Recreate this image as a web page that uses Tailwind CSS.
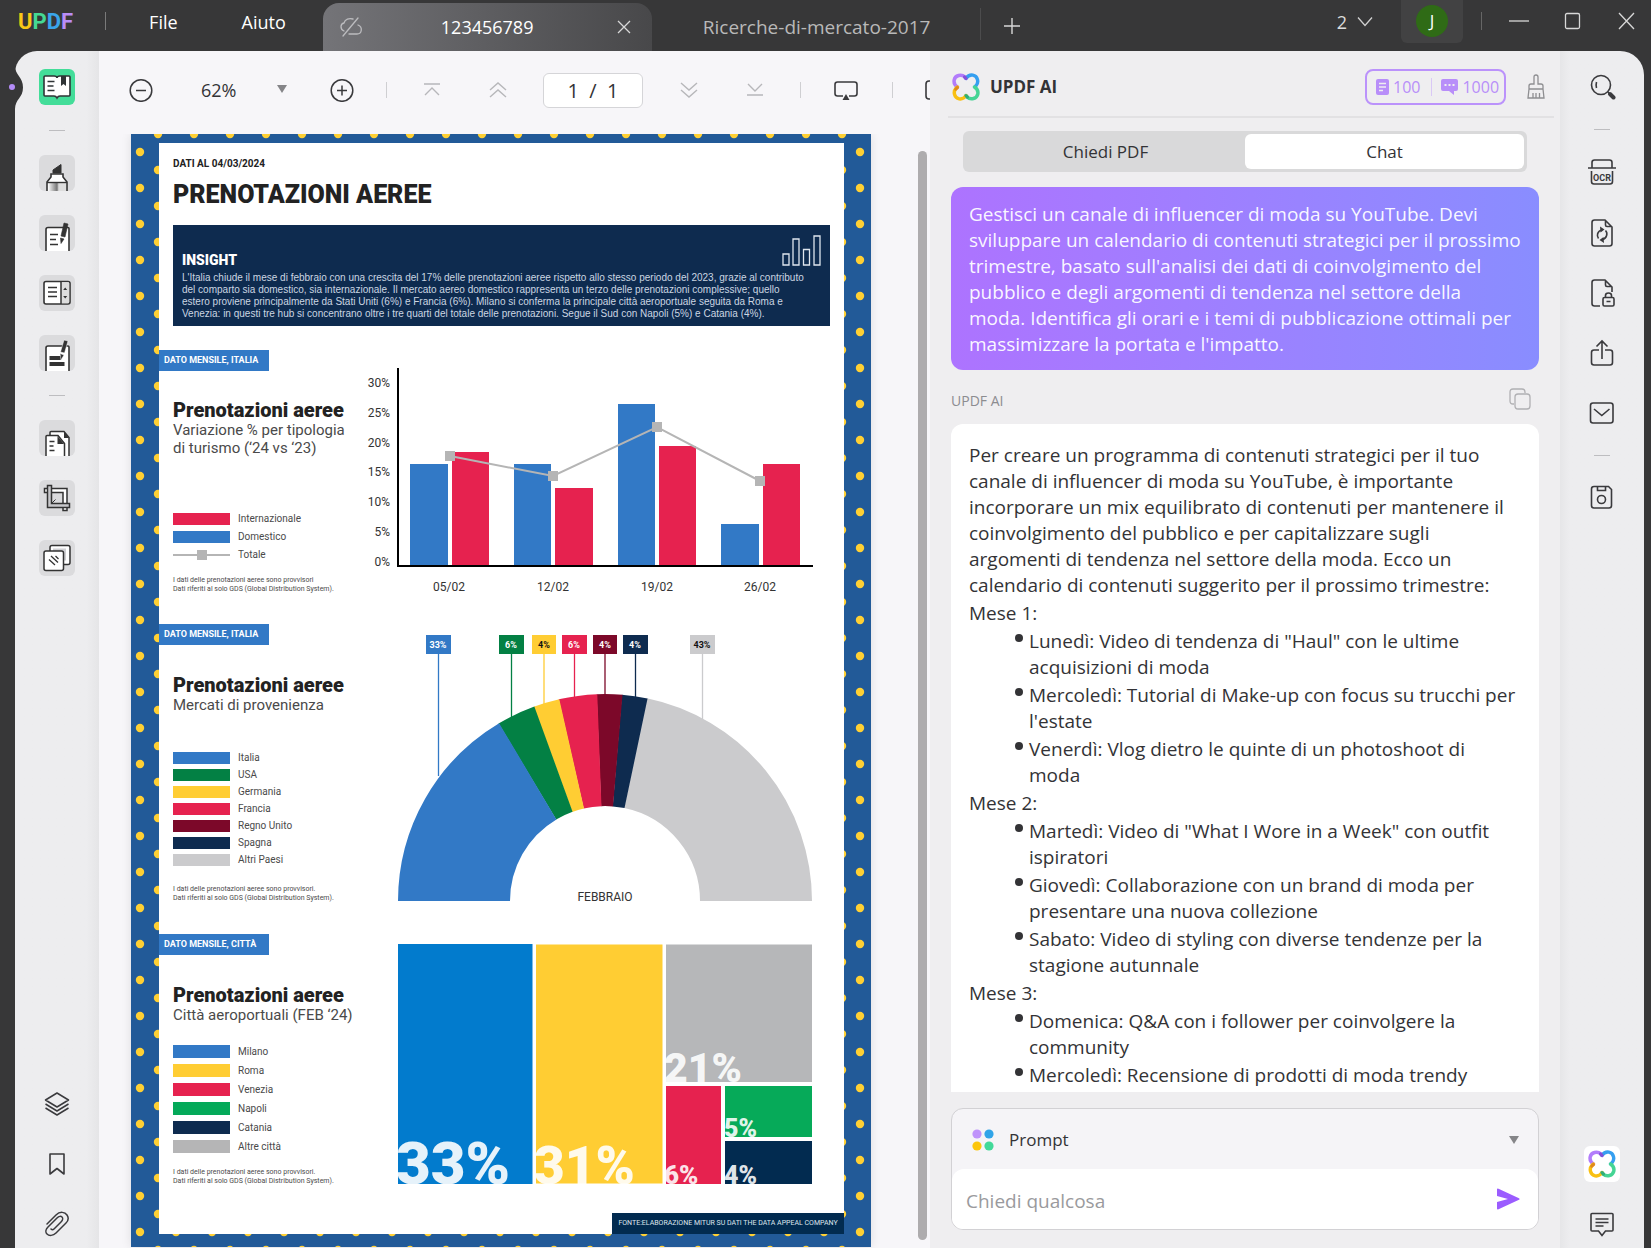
<!DOCTYPE html>
<html lang="it">
<head>
<meta charset="utf-8">
<title>UPDF - 123456789</title>
<script src="https://cdn.jsdelivr.net/npm/@tailwindcss/browser@4"></script>
</head>
<body class="flex h-screen flex-col overflow-hidden bg-[#373738] font-['Open_Sans',sans-serif] text-[#333336]">

<!-- Shared symbols -->
<svg class="hidden" aria-hidden="true">
  <symbol id="clover" viewBox="0 0 26 26">
    <g fill="none" stroke-width="3.2" stroke-linecap="round">
      <path stroke="#b27cfb" d="M5 13C2.400 11.200 1.600 9 2 6.600C2.800 2 8.800 .8 12 3.800L13 5"/>
      <path stroke="#359ff0" transform="rotate(90 13 13)" d="M5 13C2.400 11.200 1.600 9 2 6.600C2.800 2 8.800 .8 12 3.800L13 5"/>
      <path stroke="#45d494" transform="rotate(180 13 13)" d="M5 13C2.400 11.200 1.600 9 2 6.600C2.800 2 8.800 .8 12 3.800L13 5"/>
      <path stroke="#f9c012" transform="rotate(270 13 13)" d="M5 13C2.400 11.200 1.600 9 2 6.600C2.800 2 8.800 .8 12 3.800L13 5"/>
    </g>
    <path d="M5 13.500l-1.500 1.500" stroke="#e08a1c" stroke-width="3" fill="none" stroke-linecap="round"/>
    <path d="M13 21l1.300 1.300" stroke="#2fae78" stroke-width="3" fill="none" stroke-linecap="round"/>
    <path d="M13 5l-1.300-1.300" stroke="#8450d8" stroke-width="3" fill="none" stroke-linecap="round"/>
  </symbol>
</svg>

<!-- Title bar -->
<header class="flex h-[51px] shrink-0 items-start text-[18px] text-white">
  <div class="ml-[18px] mt-2 font-['Roboto',sans-serif] text-[22px] font-bold leading-7" aria-label="UPDF"><span class="text-[#f9c916]">U</span><span class="text-[#45d894]">P</span><span class="text-[#3aa5ea]">D</span><span class="text-[#b98cf7]">F</span></div>
  <span class="ml-8 mt-3 h-[18px] w-px bg-[#7a7a7a]"></span>
  <button class="ml-[43px] mt-2 leading-7">File</button>
  <button class="ml-16 mt-2 leading-7">Aiuto</button>
  <div class="ml-[37px] mt-[3px] flex h-12 w-[329px] items-center rounded-t-2xl bg-linear-to-r from-[#747478] to-[#48484a]">
    <svg class="ml-4 -mt-px h-5 w-6" viewBox="0 0 24 20" fill="none" stroke="#bcbcbf" stroke-width="1.300" stroke-linecap="round"><path d="M19 1L4 19M5 14C1 12 1 7 5 6C6 2 10 1 14 2M10 17h8C23 17 24 10 19 8"/></svg>
    <a href="#" class="ml-[78px]">123456789</a>
    <button class="ml-auto mr-[20px]" aria-label="Chiudi scheda"><svg class="h-4 w-4" viewBox="0 0 16 16" stroke="#d8d8d8" stroke-width="1.300"><path d="M2 2l12 12M14 2L2 14"/></svg></button>
  </div>
  <a href="#" class="ml-[51px] mt-[13px] w-[277px] text-[19px] leading-7 text-[#b9b9b9]">Ricerche-di-mercato-2017</a>
  <span class="mt-2 h-8 w-px bg-[#4c4c4d]"></span>
  <button class="ml-[22px] mt-[17px]" aria-label="Nuova scheda"><svg class="h-[18px] w-[18px]" viewBox="0 0 18 18" stroke="#d8d8d8" stroke-width="1.400"><path d="M9 1v16M1 9h16"/></svg></button>
  <button class="ml-auto mr-7 mt-2 flex items-center gap-2.5 leading-7 text-[#dcdcdc]">2<svg class="h-3 w-4" viewBox="0 0 16 12" fill="none" stroke="#d0d0d0" stroke-width="1.300"><path d="M1 1.500l7 8 7-8"/></svg></button>
  <button class="flex h-[43px] w-[62px] items-center justify-center rounded-b-md bg-[#424243]"><span class="-mt-px size-8 rounded-full bg-[#2f6b16] text-[17px] leading-8">J</span></button>
  <span class="ml-[18px] mt-3 h-[18px] w-px bg-[#666]"></span>
  <button class="ml-[27px] mt-3" aria-label="Riduci"><svg class="h-[18px] w-5" viewBox="0 0 20 18" stroke="#d8d8d8" stroke-width="1.300"><path d="M0 9h20"/></svg></button>
  <button class="ml-[35px] mt-3" aria-label="Ingrandisci"><svg class="h-[18px] w-[18px]" viewBox="0 0 18 18" fill="none" stroke="#d8d8d8" stroke-width="1.300"><rect x="1.500" y="1.500" width="14" height="15" rx="1.500"/></svg></button>
  <button class="ml-9 mr-[15px] mt-3" aria-label="Chiudi"><svg class="h-[18px] w-[18px]" viewBox="0 0 18 18" stroke="#d8d8d8" stroke-width="1.300"><path d="M1 1l15 16M16 1L1 17"/></svg></button>
</header>

<div class="ml-[15px] mr-[7px] flex min-h-0 flex-1">

  <!-- Left tool strip -->
  <nav class="relative flex w-[84px] shrink-0 flex-col items-center rounded-tl-[22px] bg-linear-to-r from-[#ededef] from-85% to-[#e5e5e7] pt-[18px]">
    <svg class="absolute -left-[15px] top-[15px] h-[44px] w-6" viewBox="0 0 24 44"><path d="M14 0H15C15 9 23 11 23 21.500S15 33 15 43H14z" fill="#373738"/><circle cx="12" cy="21" r="3" fill="#b48cf8"/></svg>
    <button class="rounded-md bg-[#43dd99]" aria-label="Lettura">
      <svg class="size-9" viewBox="0 0 36 36"><path d="M6 7h9q3 0 3 2q0-2 3-2h9q1 0 1 1v18q0 1-1 1h-9q-2 0-3 2q-1-2-3-2H6q-1 0-1-1V8q0-1 1-1z" fill="#fff" stroke="#2f3436" stroke-width="1.600"/><path d="M8.500 12.500h7M8.500 17h6M8.500 21.500h7" stroke="#2f3436" stroke-width="1.400"/><path d="M22 7h5v10l-2.500-2L22 17z" fill="#2f3436"/></svg>
    </button>
    <span class="mt-[25px] h-px w-4 bg-[#bdbdc0]"></span>
    <button class="mt-6 rounded-md bg-[#dbdbdd]" aria-label="Commento">
      <svg class="size-9" viewBox="0 -1 36 36"><defs><linearGradient id="pen"><stop stop-color="#fff"/><stop offset=".5" stop-color="#777"/><stop offset=".6" stop-color="#ddd"/></linearGradient></defs><path d="M8 36V26l4-5v-3h12v3l4 5v10z" fill="#fff" stroke="#333" stroke-width="1.600"/><path d="M9 27h18v8H9z" fill="url(#pen)"/><path d="M8 26.500h20" stroke="#333" stroke-width="1.400"/><path d="M14 17v-3l8-5.500V17z" fill="#333" stroke="#333"/></svg>
    </button>
    <button class="mt-6 rounded-md bg-[#dbdbdd]" aria-label="Modifica PDF">
      <svg class="size-9" viewBox="0 -1 36 36"><path d="M7 36V13.500q0-2 2-2h20q1 0 1 1V36" fill="#fff" stroke="#333" stroke-width="1.600"/><path d="M11 18.500h8M11 23.500h6M11 28.500h8" stroke="#333" stroke-width="1.400"/><path d="M25 7l4 1-3 13-4-1zM21.500 22l3.500 1-3 4.500z" fill="#333" stroke="#333" stroke-width=".6"/></svg>
    </button>
    <button class="mt-6 rounded-md bg-[#dbdbdd]" aria-label="Modulo">
      <svg class="size-9" viewBox="0 0 36 36"><rect x="5" y="6.500" width="26" height="22.500" rx="2" fill="#fff" stroke="#333" stroke-width="1.600"/><path d="M22 7.200h7q1.200 0 1.200 1.200v18.500q0 1.300-1.200 1.300h-7z" fill="#ddd"/><path d="M22 7v22" stroke="#333" stroke-width="1.500"/><path d="M9 12.500h9M9 17h9M9 21.500h9" stroke="#333" stroke-width="1.400"/><path d="M24.200 15l2-2.500 2 2.500zM24.200 21l2 2.500 2-2.500z" fill="#333"/></svg>
    </button>
    <button class="mt-6 rounded-md bg-[#dbdbdd]" aria-label="Oscura">
      <svg class="size-9" viewBox="0 -1 36 36"><path d="M7 36V12q0-2 2-2h20q1 0 1 1v25" fill="#fff" stroke="#333" stroke-width="1.600"/><path d="M10.500 20H22v4H10.500zM10.500 26h15v4h-15z" fill="#333"/><path d="M25 4l4 1-3.500 12-4-1zM21 17.500l4 1.500-3 5z" fill="#333" stroke="#fff" stroke-width=".5"/></svg>
    </button>
    <span class="mt-6 h-px w-4 bg-[#bdbdc0]"></span>
    <button class="mt-6 rounded-md bg-[#dbdbdd]" aria-label="Organizza pagine">
      <svg class="size-9" viewBox="0 -1 36 36"><path d="M11 30V11.500q0-1 1-1h13l5 6V36H11" fill="#fff" stroke="#333" stroke-width="1.500"/><path d="M25 10.500v6.500h5z" fill="#333"/><path d="M7 36V15.500q0-1 1-1h11l6.500 8V36" fill="#fff" stroke="#333" stroke-width="1.500"/><path d="M18.500 15v8H25z" fill="#333"/><path d="M10.500 20.500h5M10.500 25h4M10.500 29.500h5" stroke="#333" stroke-width="1.300"/></svg>
    </button>
    <button class="mt-6 rounded-md bg-[#dbdbdd]" aria-label="Ritaglia">
      <svg class="size-9" viewBox="0 0 36 36"><path d="M5.500 8.500h22.500v22h-4V12.500H5.500z" fill="#fff" stroke="#333" stroke-width="1.500"/><path d="M8.500 5.500h4V23.500H30.500v4H8.500z" fill="#c8c8cb" stroke="#333" stroke-width="1.500"/><path d="M12.500 23.500l4-4" stroke="#333"/></svg>
    </button>
    <button class="mt-6 rounded-md bg-[#dbdbdd]" aria-label="Filigrana">
      <svg class="size-9" viewBox="0 0 36 36"><rect x="11" y="5.500" width="20" height="19" rx="2" fill="#fff" stroke="#333" stroke-width="1.500"/><path d="M14 8.500h13v12H14z" fill="#cfcfd2"/><rect x="5" y="11" width="19.500" height="19.500" rx="2" fill="#fff" stroke="#333" stroke-width="1.500"/><path d="M10 19.500l6 5.500M12 16l7 6.500M16.500 16l3 3" stroke="#333" stroke-width="1.300"/></svg>
    </button>
    <div class="mt-auto flex flex-col items-center gap-[34px] pb-[11px]">
      <button aria-label="Livelli"><svg class="h-[26px] w-[26px]" viewBox="0 0 26 26" fill="none" stroke="#3a3a3d" stroke-width="1.500" stroke-linejoin="round"><path d="M13 2l11.500 7L13 16 1.500 9zM1.500 13L13 20l11.500-7M1.500 17L13 24l11.500-7"/></svg></button>
      <button aria-label="Segnalibri"><svg class="h-[26px] w-[26px]" viewBox="0 0 26 26" fill="none" stroke="#3a3a3d" stroke-width="1.600" stroke-linejoin="round"><path d="M6 3h14v20l-7-5.500L6 23z"/></svg></button>
      <button aria-label="Allegati"><svg class="h-[26px] w-[26px]" viewBox="0 0 26 26" fill="none" stroke="#3a3a3d" stroke-width="1.500" stroke-linecap="round"><path d="M3 13L12 4c4-4 9-3 11 0 2 3 1 6-1 8l-10 10c-3 3-7 3-9 1s-1-5 1-7l9-9c2-2 4-2 5-1s1 3-1 5l-7 7c-1 1-2 1-3 0"/></svg></button>
    </div>
  </nav>

  <!-- Document viewer -->
  <main class="flex min-w-0 flex-1 flex-col overflow-hidden bg-[#f7f6f9]">
    <div class="flex h-[83px] shrink-0 items-center overflow-hidden pb-[5px] *:shrink-0">
      <button class="ml-[30px]" aria-label="Riduci zoom"><svg class="size-6" viewBox="0 0 24 24" fill="none" stroke="#3a3a3d" stroke-width="1.500"><circle cx="12" cy="12.500" r="10.800"/><path d="M7 12.500h10"/></svg></button>
      <div class="relative ml-12 w-[87px]">
        <select aria-label="Zoom" class="w-full appearance-none bg-transparent text-[18px] leading-7"><option>62%</option></select>
        <svg class="pointer-events-none absolute right-0 top-2 h-2.5 w-3" viewBox="0 0 12 10"><path d="M1 1h10L6 9z" fill="#858588"/></svg>
      </div>
      <button class="ml-[42px]" aria-label="Aumenta zoom"><svg class="size-6" viewBox="0 0 24 24" fill="none" stroke="#3a3a3d" stroke-width="1.500"><circle cx="12" cy="12.500" r="10.800"/><path d="M7 12.500h10M12 7.500v10"/></svg></button>
      <span class="ml-8 h-4 w-px bg-[#cfcfd2]"></span>
      <button class="ml-[35px]" aria-label="Prima pagina"><svg class="size-5" viewBox="0 0 20 20" fill="none" stroke="#b7b7ba" stroke-width="1.400"><path d="M2 4h16M3 15l7-7 7 7"/></svg></button>
      <button class="ml-[46px]" aria-label="Pagina precedente"><svg class="size-5" viewBox="0 0 20 20" fill="none" stroke="#b7b7ba" stroke-width="1.400"><path d="M2 10l8-7 8 7M2 17l8-7 8 7"/></svg></button>
      <input aria-label="Pagina" value="1  /  1" class="ml-[35px] h-[35px] w-[100px] rounded-md border border-[#d5d5d8] bg-white text-center text-[20px]">
      <button class="ml-9" aria-label="Pagina successiva"><svg class="size-5" viewBox="0 0 20 20" fill="none" stroke="#b7b7ba" stroke-width="1.400"><path d="M2 3l8 7 8-7M2 10l8 7 8-7"/></svg></button>
      <button class="ml-[46px]" aria-label="Ultima pagina"><svg class="size-5" viewBox="0 0 20 20" fill="none" stroke="#b7b7ba" stroke-width="1.400"><path d="M3 4l7 7 7-7M2 15h16"/></svg></button>
      <span class="ml-[35px] h-4 w-px bg-[#cfcfd2]"></span>
      <button class="ml-[33px]" aria-label="Presentazione"><svg class="h-6 w-6" viewBox="0 0 24 24" fill="none" stroke="#3a3a3d" stroke-width="1.600"><path d="M9 18H3.500Q1 18 1 15.500V6.500Q1 4 3.500 4h17Q23 4 23 6.500v9Q23 18 20.500 18H15"/><path d="M12 16l3.500 6h-7z" fill="#3a3a3d" stroke="none"/></svg></button>
      <span class="ml-[34px] h-4 w-px bg-[#cfcfd2]"></span>
      <button class="ml-8" aria-label="Vista"><svg class="h-6 w-6" viewBox="0 0 24 24" fill="none" stroke="#3a3a3d" stroke-width="1.600"><rect x="1" y="3" width="22" height="18" rx="3"/></svg></button>
    </div>

    <div class="flex min-h-0 flex-1 justify-between overflow-hidden">
      <article class="relative ml-8 h-[1113px] w-[740px] shrink-0 bg-[#225a98] pl-7 pr-[27px] pt-[9px] font-['Roboto',sans-serif] text-[#222] shadow-[0_0_10px_#0000001a]">
        <svg class="absolute inset-0 h-full w-full" aria-hidden="true">
          <pattern id="dots" width="36" height="36" patternUnits="userSpaceOnUse"><g fill="#ffd034"><circle cx="27" cy="0" r="4.200"/><circle cx="27" cy="36" r="4.200"/><circle cx="9" cy="18" r="4.200"/></g></pattern>
          <rect width="100%" height="100%" fill="url(#dots)"/>
        </svg>

        <div class="relative flex h-[1091px] flex-col bg-white">
          <div class="px-[14px] pt-[13px]">
            <p class="text-[10px] font-bold leading-4">DATI AL 04/03/2024</p>
            <h1 class="mt-2 text-[25px] font-black leading-[30px]">PRENOTAZIONI AEREE</h1>
            <div class="mt-[15px] whitespace-nowrap bg-[#0e2b4f] px-[9px] pb-1.5 pt-2.5">
              <div class="flex h-[33px] items-end justify-between">
                <h2 class="text-[14px] font-black leading-4 text-white">INSIGHT</h2>
                <svg class="h-[31px] w-[39px] self-start" viewBox="0 0 39 31" fill="none" stroke="#dfe6ee" stroke-width="1.300"><path d="M1 30V19h6v11zM11 30V4h6v26zM21.500 30V14.500h6V30zM32 30V1h6v29z"/></svg>
              </div>
              <p class="mt-1 font-['Liberation_Sans',sans-serif] text-[10px] leading-3 text-[#cbd6e2]">L'Italia chiude il mese di febbraio con una crescita del 17% delle prenotazioni aeree rispetto allo stesso periodo del 2023, grazie al contributo<br>del comparto sia domestico, sia internazionale. Il mercato aereo domestico rappresenta un terzo delle prenotazioni complessive; quello<br>estero proviene principalmente da Stati Uniti (6%) e Francia (6%). Milano si conferma la principale città aeroportuale seguita da Roma e<br>Venezia: in questi tre hub si concentrano oltre i tre quarti del totale delle prenotazioni. Segue il Sud con Napoli (5%) e Catania (4%).</p>
            </div>
          </div>

          <!-- Change by kind of tourism -->
          <section class="mt-6 flex h-[274px] shrink-0">
            <div class="w-52 shrink-0 whitespace-nowrap">
              <p class="h-[21px] w-[110px] bg-[#3279c6] pl-[5px] text-[9px] font-bold leading-[21px] text-white">DATO MENSILE, ITALIA</p>
              <div class="pl-[14px]">
                <h2 class="mt-7 text-[20px] font-black leading-[22px]">Prenotazioni aeree</h2>
                <p class="text-[15px] leading-[18px] text-[#4a4a4a]">Variazione % per tipologia<br>di turismo (‘24 vs ‘23)</p>
                <ul class="mt-[53px] text-[10px] leading-[18px] text-[#4a4a4a]">
                  <li class="flex items-center gap-2"><span class="h-3 w-[57px] bg-[#e6224f]"></span>Internazionale</li>
                  <li class="flex items-center gap-2"><span class="h-3 w-[57px] bg-[#3279c6]"></span>Domestico</li>
                  <li class="flex items-center gap-2"><span class="flex h-3 w-[57px] items-center justify-center bg-[linear-gradient(#b5b5b5,#b5b5b5)] bg-[length:100%_2px] bg-center bg-no-repeat"><span class="size-2.5 bg-[#b5b5b5]"></span></span>Totale</li>
                </ul>
                <p class="mt-3 text-[7px] leading-[9px] text-[#4a4a4a]">I dati delle prenotazioni aeree sono provvisori<br>Dati riferiti al solo GDS (Global Distribution System).</p>
              </div>
            </div>
            <svg class="h-[274px] w-[460px] shrink-0" viewBox="367 350 460 274" font-size="12" fill="#333" role="img" aria-label="Variazione per tipologia di turismo">
              <g text-anchor="end"><text x="390" y="387">30%</text><text x="390" y="417">25%</text><text x="390" y="447">20%</text><text x="390" y="476">15%</text><text x="390" y="506">10%</text><text x="390" y="536">5%</text><text x="390" y="566">0%</text></g>
              <g fill="#3279c6"><path d="M410 464h38v102h-38zM514 464h37v102h-37zM618 404h37v162h-37zM721 524h38v42h-38z"/></g>
              <g fill="#e6224f"><path d="M452 452h37v114h-37zM555 488h38v78h-38zM659 446h37v120h-37zM763 464h37v102h-37z"/></g>
              <path d="M398 368v198h415" fill="none" stroke="#000" stroke-width="2"/>
              <path d="M450 456l103 20 104-49 103 54" fill="none" stroke="#b5b5b5" stroke-width="2"/>
              <path d="M445 451h10v10h-10zM548 471h10v10h-10zM652 422h10v10h-10zM755 476h10v10h-10z" fill="#b5b5b5"/>
              <g text-anchor="middle"><text x="449" y="591">05/02</text><text x="553" y="591">12/02</text><text x="657" y="591">19/02</text><text x="760" y="591">26/02</text></g>
            </svg>
          </section>

          <!-- Markets of origin -->
          <section class="flex h-[310px] shrink-0">
            <div class="w-52 shrink-0 whitespace-nowrap">
              <p class="h-[21px] w-[110px] bg-[#3279c6] pl-[5px] text-[9px] font-bold leading-[21px] text-white">DATO MENSILE, ITALIA</p>
              <div class="pl-[14px]">
                <h2 class="mt-[29px] text-[20px] font-black leading-[22px]">Prenotazioni aeree</h2>
                <p class="text-[15px] leading-[18px] text-[#4a4a4a]">Mercati di provenienza</p>
                <ul class="mt-[35px] text-[10px] leading-[17px] text-[#4a4a4a]">
                  <li class="flex items-center gap-2"><span class="h-3 w-[57px] bg-[#3279c6]"></span>Italia</li>
                  <li class="flex items-center gap-2"><span class="h-3 w-[57px] bg-[#038044]"></span>USA</li>
                  <li class="flex items-center gap-2"><span class="h-3 w-[57px] bg-[#ffcd33]"></span>Germania</li>
                  <li class="flex items-center gap-2"><span class="h-3 w-[57px] bg-[#e6224f]"></span>Francia</li>
                  <li class="flex items-center gap-2"><span class="h-3 w-[57px] bg-[#7c0829]"></span>Regno Unito</li>
                  <li class="flex items-center gap-2"><span class="h-3 w-[57px] bg-[#0e2b4f]"></span>Spagna</li>
                  <li class="flex items-center gap-2"><span class="h-3 w-[57px] bg-[#cbcbcd]"></span>Altri Paesi</li>
                </ul>
                <p class="mt-[17px] text-[7px] leading-[9px] text-[#4a4a4a]">I dati delle prenotazioni aeree sono provvisori.<br>Dati riferiti al solo GDS (Global Distribution System).</p>
              </div>
            </div>
            <svg class="h-[310px] w-[460px] shrink-0" viewBox="367 624 460 310" role="img" aria-label="Mercati di provenienza">
              <g stroke-width="1.300"><path d="M438.500 654v122" stroke="#3279c6"/><path d="M511.500 654v64" stroke="#038044"/><path d="M544 654v51" stroke="#ffcd33"/><path d="M574.500 654v44" stroke="#e6224f"/><path d="M605 654v42" stroke="#7c0829"/><path d="M635.500 654v44" stroke="#0e2b4f"/><path d="M702.500 654v67" stroke="#cbcbcd"/></g>
              <g fill="none" stroke-width="112">
                <path pathLength="100" d="M454 901a151 151 0 0 1 302 0" stroke="#cbcbcd" stroke-dasharray="0 56.5 60 200"/>
                <path pathLength="100" d="M454 901a151 151 0 0 1 302 0" stroke="#0e2b4f" stroke-dasharray="0 52.6 4 200"/>
                <path pathLength="100" d="M454 901a151 151 0 0 1 302 0" stroke="#7c0829" stroke-dasharray="0 48.7 4 200"/>
                <path pathLength="100" d="M454 901a151 151 0 0 1 302 0" stroke="#e6224f" stroke-dasharray="0 42.8 6 200"/>
                <path pathLength="100" d="M454 901a151 151 0 0 1 302 0" stroke="#ffcd33" stroke-dasharray="0 38.8 4.100 200"/>
                <path pathLength="100" d="M454 901a151 151 0 0 1 302 0" stroke="#038044" stroke-dasharray="0 32.8 6.100 200"/>
                <path pathLength="100" d="M454 901a151 151 0 0 1 302 0" stroke="#3279c6" stroke-dasharray="32.900 200"/>
              </g>
              <path d="M426 635h25v19h-25z" fill="#3279c6"/><path d="M499 635h25v19h-25z" fill="#038044"/><path d="M532 635h24v19h-24z" fill="#ffcd33"/><path d="M562 635h25v19h-25z" fill="#e6224f"/><path d="M593 635h24v19h-24z" fill="#7c0829"/><path d="M623 635h25v19h-25z" fill="#0e2b4f"/><path d="M690 635h25v19h-25z" fill="#cbcbcd"/>
              <g font-size="9" font-weight="700" text-anchor="middle" fill="#fff"><text x="438" y="648">33%</text><text x="511" y="648">6%</text><text x="544" y="648" fill="#111">4%</text><text x="574" y="648">6%</text><text x="605" y="648">4%</text><text x="635" y="648">4%</text><text x="702" y="648" fill="#111">43%</text></g>
              <text x="605" y="901" font-size="12" text-anchor="middle" fill="#333">FEBBRAIO</text>
            </svg>
          </section>

          <!-- Airport cities -->
          <section class="flex h-[279px] shrink-0">
            <div class="w-52 shrink-0 whitespace-nowrap">
              <p class="h-[21px] w-[110px] bg-[#3279c6] pl-[5px] text-[9px] font-bold leading-[21px] text-white">DATO MENSILE, CITTÀ</p>
              <div class="pl-[14px]">
                <h2 class="mt-[29px] text-[20px] font-black leading-[22px]">Prenotazioni aeree</h2>
                <p class="text-[15px] leading-[18px] text-[#4a4a4a]">Città aeroportuali (FEB ‘24)</p>
                <ul class="mt-[18px] text-[10px] leading-[19px] text-[#4a4a4a]">
                  <li class="flex items-center gap-2"><span class="h-[13px] w-[57px] bg-[#3279c6]"></span>Milano</li>
                  <li class="flex items-center gap-2"><span class="h-[13px] w-[57px] bg-[#ffcd33]"></span>Roma</li>
                  <li class="flex items-center gap-2"><span class="h-[13px] w-[57px] bg-[#e6224f]"></span>Venezia</li>
                  <li class="flex items-center gap-2"><span class="h-[13px] w-[57px] bg-[#04a959]"></span>Napoli</li>
                  <li class="flex items-center gap-2"><span class="h-[13px] w-[57px] bg-[#0e2b4f]"></span>Catania</li>
                  <li class="flex items-center gap-2"><span class="h-[13px] w-[57px] bg-[#b5b5b6]"></span>Altre città</li>
                </ul>
                <p class="mt-3 text-[7px] leading-[9px] text-[#4a4a4a]">I dati delle prenotazioni aeree sono provvisori.<br>Dati riferiti al solo GDS (Global Distribution System).</p>
              </div>
            </div>
            <svg class="h-[279px] w-[460px] shrink-0" viewBox="367 934 460 279" font-weight="900" role="img" aria-label="Città aeroportuali">
              <path d="M398 944h134.500v240H398z" fill="#027bcd"/><path d="M536 944.500h126.500v239H536z" fill="#ffcd33"/><path d="M666 944.500h146v137.500H666z" fill="#b6b7b9"/><path d="M666 1086h55v98h-55z" fill="#e6224f"/><path d="M725 1086h87v51h-87z" fill="#06aa59"/><path d="M725 1141h87v43h-87z" fill="#022b50"/>
              <g fill="#fff" fill-opacity=".9"><text x="396" y="1184" font-size="60">33%</text><text x="534" y="1184" font-size="53">31%</text><text x="664" y="1082" font-size="41">21%</text><text x="664" y="1184" font-size="26">6%</text><text x="724" y="1137" font-size="25">5%</text><text x="724" y="1184" font-size="25">4%</text></g>
            </svg>
          </section>
          <p class="h-[21px] w-[232px] shrink-0 self-end whitespace-nowrap bg-[#022b50] text-center text-[7px] leading-[21px] text-[#dfe6ee]">FONTE:ELABORAZIONE MITUR SU DATI THE DATA APPEAL COMPANY</p>
        </div>
      </article>
      <div class="mb-2 mr-[3px] mt-[17px] w-[9px] rounded-full bg-[#aeacae]"></div>
    </div>
  </main>

  <!-- Assistant panel -->
  <aside class="flex w-[630px] shrink-0 flex-col bg-[#efeef0]">
    <div class="ml-[18px] mr-1.5 flex h-[67px] shrink-0 items-center border-b-2 border-[#e2e1e3] pl-1 pr-[9px] pt-[7px]">
      <svg class="size-7"><use href="#clover"/></svg>
      <h2 class="ml-2.5 text-[17px] font-bold leading-6">UPDF AI</h2>
      <div class="ml-auto flex h-9 w-[141px] items-center rounded-lg border-2 border-[#bb92fb] pl-[9px] text-[16px] text-[#b88ef9]">
        <svg class="h-4 w-[13px]" viewBox="0 0 13 16"><rect width="13" height="16" rx="2" fill="#b88ef9"/><path d="M3 4.500h7M3 8h7M3 11.500h4" stroke="#efeef0" stroke-width="1.300"/></svg>
        <span class="ml-1">100</span>
        <span class="ml-[11px] h-[18px] w-px bg-[#d9c8f6]"></span>
        <svg class="ml-[9px] h-4 w-[17px]" viewBox="0 0 17 16"><path d="M2 0h13q2 0 2 2v8q0 2-2 2h-2v4l-5-4H2q-2 0-2-2V2q0-2 2-2z" fill="#b88ef9"/><path d="M3.500 6h2M7.500 6h2M11.500 6h2" stroke="#efeef0" stroke-width="2"/></svg>
        <span class="ml-1">1000</span>
      </div>
      <button class="ml-[21px]" aria-label="Cancella chat"><svg class="h-[26px] w-[18px]" viewBox="0 0 18 26" fill="none" stroke="#8e8e91" stroke-width="1.300"><path d="M7 10V3q0-2 2-2t2 2v7h3q2 0 2 2v3H2v-3q0-2 2-2zM2 15L1 24h16l-1-9M6 24v-5M9 24v-5M12.500 24v-5"/></svg></button>
    </div>

    <div class="mx-[33px] mt-[13px] flex h-[41px] shrink-0 rounded-md bg-[#d9d9da] p-[3px] text-[17px]" role="tablist">
      <button class="flex-1" role="tab">Chiedi PDF</button>
      <button class="flex-1 rounded-md bg-white" role="tab" aria-selected="true">Chat</button>
    </div>

    <div class="mx-[21px] mt-[15px] flex min-h-0 flex-1 flex-col overflow-hidden text-[19px] leading-[26px]">
      <p class="shrink-0 whitespace-nowrap rounded-xl bg-linear-to-r from-[#ad73ff] to-[#898dff] px-[18px] pb-[13px] pt-[14px] text-white/95">Gestisci un canale di influencer di moda su YouTube. Devi<br>sviluppare un calendario di contenuti strategici per il prossimo<br>trimestre, basato sull'analisi dei dati di coinvolgimento del<br>pubblico e degli argomenti di tendenza nel settore della<br>moda. Identifica gli orari e i temi di pubblicazione ottimali per<br>massimizzare la portata e l'impatto.</p>
      <div class="flex h-[54px] shrink-0 items-center justify-between pr-2 pt-1 text-[#8c8c90]">
        <span class="mt-1 text-[14px]">UPDF AI</span>
        <button aria-label="Copia"><svg class="h-6 w-[22px]" viewBox="0 0 22 24" fill="none" stroke="#b0b0b3" stroke-width="1.300"><path d="M5 17H4q-3 0-3-3V5q0-3 3-3h9q3 0 3 3v1"/><rect x="6" y="7" width="15" height="15" rx="3"/></svg></button>
      </div>
      <div class="min-h-0 flex-1 overflow-hidden whitespace-nowrap rounded-t-xl bg-white px-[18px] pt-[18px] *:mb-0.5 [&_li]:relative [&_li]:mb-0.5 [&_li]:pl-[60px] [&_li]:before:absolute [&_li]:before:left-[46px] [&_li]:before:top-1.5 [&_li]:before:size-2 [&_li]:before:rounded-full [&_li]:before:bg-[#333336] [&_li]:before:content-['']">
        <p>Per creare un programma di contenuti strategici per il tuo<br>canale di influencer di moda su YouTube, è importante<br>incorporare un mix equilibrato di contenuti per mantenere il<br>coinvolgimento del pubblico e per capitalizzare sugli<br>argomenti di tendenza nel settore della moda. Ecco un<br>calendario di contenuti suggerito per il prossimo trimestre:</p>
        <p>Mese 1:</p>
        <ul>
          <li>Lunedì: Video di tendenza di "Haul" con le ultime<br>acquisizioni di moda</li>
          <li>Mercoledì: Tutorial di Make-up con focus su trucchi per<br>l'estate</li>
          <li>Venerdì: Vlog dietro le quinte di un photoshoot di<br>moda</li>
        </ul>
        <p>Mese 2:</p>
        <ul>
          <li>Martedì: Video di "What I Wore in a Week" con outfit<br>ispiratori</li>
          <li>Giovedì: Collaborazione con un brand di moda per<br>presentare una nuova collezione</li>
          <li>Sabato: Video di styling con diverse tendenze per la<br>stagione autunnale</li>
        </ul>
        <p>Mese 3:</p>
        <ul>
          <li>Domenica: Q&amp;A con i follower per coinvolgere la<br>community</li>
          <li>Mercoledì: Recensione di prodotti di moda trendy</li>
        </ul>
      </div>
    </div>

    <form class="mx-[21px] mb-[18px] mt-4 flex h-[122px] shrink-0 flex-col overflow-hidden rounded-xl border border-[#d2d1d4] bg-[#f5f4f7]">
      <div class="relative flex h-[60px] shrink-0 items-center pl-5 pr-[18px] pt-0.5">
        <svg class="size-[22px]" viewBox="0 0 22 22"><circle cx="5" cy="5" r="4.600" fill="#bf93fb"/><circle cx="17" cy="5" r="4.600" fill="#31a4e8"/><circle cx="5" cy="17" r="4.600" fill="#fcc60c"/><circle cx="17" cy="17" r="4.600" fill="#42d999"/></svg>
        <select aria-label="Prompt" class="ml-[15px] flex-1 appearance-none bg-transparent text-[17px] leading-7"><option>Prompt</option></select>
        <svg class="pointer-events-none h-2.5 w-3" viewBox="0 0 12 10"><path d="M1 1h10L6 9z" fill="#858588"/></svg>
      </div>
      <div class="flex flex-1 items-center rounded-t-xl bg-white pl-[14px] pr-[18px] pt-1">
        <input type="text" aria-label="Messaggio" placeholder="Chiedi qualcosa" class="flex-1 bg-transparent text-[19px] leading-7 outline-none placeholder:text-[#9a9a9d]">
        <button aria-label="Invia"><svg class="-mt-1 h-[22px] w-6" viewBox="0 0 24 22"><path d="M1 1.500q0-1.500 1.500-.8L23 10.200q1.200.8 0 1.600L2.500 21.300Q1 22 1 20.500v-6.500L12 11 1 8z" fill="#9b5cff"/></svg></button>
      </div>
    </form>
  </aside>

  <!-- Right tool strip -->
  <nav class="flex w-[84px] shrink-0 flex-col items-center rounded-tr-[24px] bg-linear-to-r from-[#e6e6e8] to-[#ededef] to-12% pt-[22px] text-[#3a3a3d]">
    <button aria-label="Cerca"><svg class="h-7 w-7" viewBox="0 0 28 28" fill="none" stroke="currentColor" stroke-width="1.600"><circle cx="13" cy="12" r="9.500"/><path d="M8.500 9q-.8 3 0 6"/><path d="M20 19l2 2" /><path d="M22 21l3.500 3.500" stroke-width="4" stroke-linecap="round"/></svg></button>
    <span class="mt-7 h-px w-4 bg-[#bdbdc0]"></span>
    <button class="mt-7" aria-label="OCR"><svg class="h-7 w-7" viewBox="0 0 28 28" fill="none" stroke="currentColor" stroke-width="1.600"><path d="M4 10V4.500Q4 2 6.500 2h15Q24 2 24 4.500V10M0 10h28M3.500 13v10.500q0 2.500 2.500 2.500h16q2.500 0 2.500-2.500V13"/><text x="14" y="22.500" font-size="9" font-weight="700" text-anchor="middle" fill="currentColor" stroke="none" font-family="Roboto">OCR</text></svg></button>
    <button class="mt-[33px]" aria-label="Converti"><svg class="h-7 w-7" viewBox="0 0 28 28" fill="none" stroke="currentColor" stroke-width="1.600"><path d="M17 1H6.500Q4 1 4 3.500v21Q4 27 6.500 27h15q2.500 0 2.500-2.500V8zM17.500 1.500V6q0 1.500 1.500 1.500h4.500"/><path d="M10.500 19.500C8.500 17 9 12 14 11M17.500 11.500C20 14 19 19.500 14.500 20.500"/><path d="M12 7.500l4.500 3-4 3zM16 24l-4.500-3 4-3z" fill="currentColor" stroke="none"/></svg></button>
    <button class="mt-8" aria-label="Proteggi"><svg class="h-7 w-7" viewBox="0 0 28 28" fill="none" stroke="currentColor" stroke-width="1.600"><path d="M12 27H6.500Q4 27 4 24.500v-21Q4 1 6.500 1H17l7 7v5M17.500 1.500V6q0 1.500 1.500 1.500h4.500"/><rect x="15" y="18.500" width="11" height="8.500" rx="1.500"/><path d="M17.500 18v-1.500q0-2.500 3-2.500t3 2.500V18M18.500 22.500h4"/></svg></button>
    <button class="mt-8" aria-label="Condividi"><svg class="h-7 w-7" viewBox="0 0 28 28" fill="none" stroke="currentColor" stroke-width="1.600"><path d="M11 11H6q-2.500 0-2.500 2.500v10Q3.500 26 6 26h16q2.500 0 2.500-2.500v-10Q24.500 11 22 11h-5M14 20V2.500M8.500 7.500L14 2l5.500 5.500"/></svg></button>
    <button class="mt-8" aria-label="Posta"><svg class="h-7 w-7" viewBox="0 0 28 28" fill="none" stroke="currentColor" stroke-width="1.600"><rect x="2.500" y="4" width="22.500" height="20" rx="2.500"/><path d="M6 10l7.800 6.500L21.500 10"/></svg></button>
    <span class="mt-7 h-px w-4 bg-[#bdbdc0]"></span>
    <button class="mt-[27px]" aria-label="Salva"><svg class="h-7 w-7" viewBox="0 0 28 28" fill="none" stroke="currentColor" stroke-width="1.600"><path d="M6 3.500h14.500l3 3V22.500Q23.500 25 21 25H6q-2.500 0-2.500-2.500V6Q3.500 3.500 6 3.500z"/><path d="M9.500 4v3.500h8V4"/><circle cx="13.500" cy="16.500" r="4"/></svg></button>
    <div class="mt-auto flex flex-col items-center gap-7 pb-2.5">
      <button class="flex size-9 items-center justify-center rounded-md bg-white" aria-label="UPDF AI"><svg class="size-7"><use href="#clover"/></svg></button>
      <button aria-label="Commenti"><svg class="h-7 w-7" viewBox="0 0 28 28" fill="none" stroke="currentColor" stroke-width="1.600"><path d="M4 3.500h20q1 0 1 1V20q0 1-1 1h-6.500L14 25.500 10.500 21H4q-1 0-1-1V4.500q0-1 1-1zM7.500 9h13M7.500 12.500h13M7.500 16h8"/></svg></button>
    </div>
  </nav>
</div>
</body>
</html>
